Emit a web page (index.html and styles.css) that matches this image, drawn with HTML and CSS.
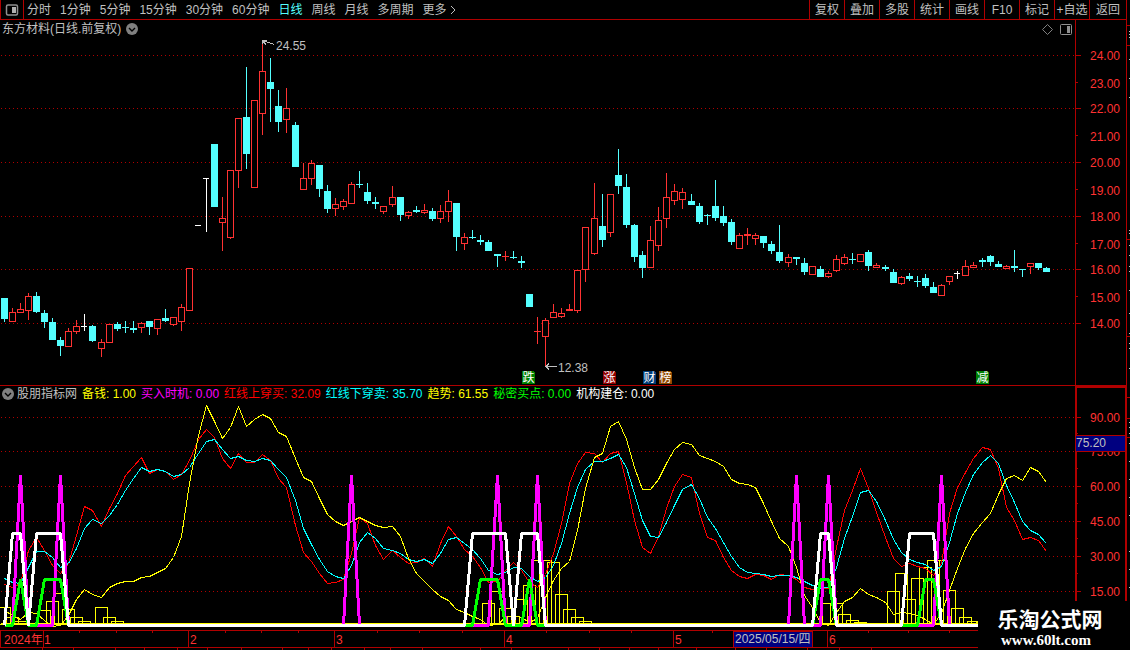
FILE: index.html
```html
<!DOCTYPE html>
<html lang="zh-CN">
<head>
    <meta charset="UTF-8">
    <meta name="viewport" content="width=device-width, initial-scale=1.0">
    <title>东方材料 日线</title>
    <link rel="stylesheet" href="styles.css">
</head>
<body>
    <div class="app">
        <header class="toolbar">
            <button class="panel-toggle" aria-label="侧栏">
                <svg width="14" height="12" viewBox="0 0 14 12"><rect x="1.500" y="1" width="11" height="10" rx="1.500" fill="none" stroke="#909090" stroke-width="1.500"/><rect x="7" y="3" width="4" height="6" fill="#b0b0b0"/></svg>
            </button>
            <nav class="periods">
                <button>分时</button>
                <button>1分钟</button>
                <button>5分钟</button>
                <button>15分钟</button>
                <button>30分钟</button>
                <button>60分钟</button>
                <button class="active">日线</button>
                <button>周线</button>
                <button>月线</button>
                <button>多周期</button>
                <button class="more">更多<svg width="7" height="10" viewBox="0 0 7 10"><path d="M1 1l4 4-4 4" fill="none" stroke="#c0c0c0"/></svg></button>
            </nav>
            <div class="tools">
                <button>复权</button>
                <button>叠加</button>
                <button>多股</button>
                <button>统计</button>
                <button>画线</button>
                <button>F10</button>
                <button>标记</button>
                <button>+自选</button>
                <button>返回</button>
            </div>
        </header>

        <main class="charts">
            <section class="pane price">
                <div class="plot">
                    <div class="pane-head">
                        <span>东方材料(日线.前复权)</span>
                        <button class="drop" aria-label="展开"><svg width="12" height="12" viewBox="0 0 12 12"><circle cx="6" cy="6" r="6" fill="#808080"/><path d="M3 5l3 3 3-3" fill="none" stroke="#000" stroke-width="1.4"/></svg></button>
                        <span class="head-icons">
                            <svg width="11" height="11" viewBox="0 0 11 11"><path d="M5.500.5l5 5-5 5-5-5z" fill="none" stroke="#808080"/></svg>
                            <svg width="12" height="11" viewBox="0 0 12 11"><rect x=".5" y=".5" width="11" height="10" rx="1" fill="none" stroke="#909090"/><rect x="7" y="2" width="3" height="7" fill="#909090"/></svg>
                        </span>
                    </div>
                    <svg class="canvas" id="priceChart" height="347"></svg>
                </div>
                <svg class="scale" id="priceScale" width="51" height="365"></svg>
            </section>

            <section class="pane indicator">
                <div class="plot">
                    <div class="legend">
                        <button class="drop" aria-label="展开"><svg width="12" height="12" viewBox="0 0 12 12"><circle cx="6" cy="6" r="6" fill="#808080"/><path d="M3 5l3 3 3-3" fill="none" stroke="#000" stroke-width="1.4"/></svg></button>
                        <span class="name">股朋指标网</span>
                        <span class="yellow">备钱: 1.00</span>
                        <span class="magenta">买入时机: 0.00</span>
                        <span class="red">红线上穿买: 32.09</span>
                        <span class="cyan">红线下穿卖: 35.70</span>
                        <span class="yellow">趋势: 61.55</span>
                        <span class="green">秘密买点: 0.00</span>
                        <span class="white">机构建仓: 0.00</span>
                    </div>
                    <svg class="canvas" id="lineChart" height="228"></svg>
                </div>
                <svg class="scale" id="lineScale" width="52" height="245"></svg>
            </section>

            <svg class="dates" id="dateAxis" height="20"></svg>
        </main>

        <svg class="edge" id="edge" width="3" height="650"></svg>

        <div class="brand">
            <div class="brand-name">乐淘公式网</div>
            <div class="brand-url">www.60lt.com</div>
        </div>
    </div>

    <script src="chart.js"></script>
</body>
</html>
```
FILE: styles.css
```css
body, html {
    margin: 0;
    padding: 0;
    background-color: #000;
}

body {
    font-family: "Liberation Sans", "Noto Sans CJK SC", sans-serif;
    font-size: 12px;
    line-height: 16px;
    color: #c0c0c0;
}

button {
    margin: 0;
    padding: 0;
    border: 0;
    background: none;
    color: inherit;
    font: inherit;
    white-space: nowrap;
    cursor: pointer;
}

svg {
    display: block;
}

.app {
    position: relative;
    display: grid;
    grid-template-columns: minmax(0, 1fr) 3px;
    min-height: 100vh;
    overflow: hidden;
}

/* toolbar */
.toolbar {
    display: flex;
    height: 19px;
    border-bottom: 1px solid #b00000;
    border-right: 1px solid #b00000;
}

.panel-toggle {
    display: flex;
    align-items: center;
    justify-content: center;
    width: 24px;
    box-sizing: border-box;
    border-left: 1px solid #b00000;
    border-right: 1px solid #b00000;
}

.periods {
    display: flex;
    gap: 9px;
    padding-left: 3px;
}

.periods .active {
    color: #54ffff;
}

.more {
    display: flex;
    align-items: center;
    gap: 3px;
}

.tools {
    display: flex;
    margin-left: auto;
}

.tools button {
    width: 35px;
    box-sizing: border-box;
    border-left: 1px solid #b00000;
}

.tools button:last-child {
    width: 37px;
}

/* charts */
.charts {
    grid-column: 1;
    grid-row: 2;
    min-width: 0;
}

.pane {
    display: flex;
}

.price {
    height: 365px;
    border-bottom: 1px solid #b00000;
    border-right: 1px solid #b00000;
}

.indicator {
    height: 244px;
    border-bottom: 1px solid #b00000;
}

.plot {
    flex: 1;
    min-width: 0;
}

.scale {
    flex: none;
    overflow: visible;
}

.canvas {
    width: 100%;
}

.pane-head {
    display: flex;
    align-items: center;
    gap: 5px;
    height: 18px;
    padding-left: 2px;
    line-height: 18px;
}

.head-icons {
    display: flex;
    gap: 7px;
    margin-left: auto;
    padding-right: 3px;
}

.legend {
    display: flex;
    align-items: center;
    gap: 5px;
    height: 16px;
    padding-left: 2px;
    white-space: nowrap;
}

.legend .name {
    margin-left: -2px;
}

.yellow {
    color: #ffff00;
}

.magenta {
    color: #ff00ff;
}

.red {
    color: #ff0000;
}

.cyan {
    color: #00ffff;
}

.green {
    color: #00ff00;
}

.white {
    color: #ffffff;
}

.dates {
    width: 100%;
}

.edge {
    grid-column: 2;
    grid-row: 1 / 3;
}

svg text {
    font-size: 12px;
    fill: #c0c0c0;
}

svg .label {
    fill: #ff3232;
}

svg .badge {
    fill: #fff;
}

/* site mark over the corner */
.brand {
    position: absolute;
    right: 0;
    bottom: 0;
    width: 152px;
    height: 50px;
    box-sizing: border-box;
    padding: 8px 16px 0 0;
    background-color: #000;
    color: #fff;
    text-align: center;
}

.brand-name {
    padding-left: 8px;
    font-size: 21px;
    font-weight: bold;
    line-height: 22px;
}

.brand-url {
    font-family: "Liberation Serif", serif;
    font-size: 15px;
    font-weight: bold;
    line-height: 18px;
}
```
FILE: chart.js
```js
var NS = 'http://www.w3.org/2000/svg';
var DARK = '#b00000';
var UP = '#ff3232';
var DOWN = '#54ffff';

// kind, body top, body bottom, high, low
var candles = `d 298 319 298 322|u 312 322 308 322|u 309 313 303 313|u 296 311 293 320|d 296 312 292 313|d 313 322 310 328
d 322 340 318 340|d 340 346 337 356|u 331 347 328 347|u 326 332 320 334|w 326 327 314 331|d 326 341 325 342
u 342 349 339 357|u 324 343 324 343|d 324 329 322 331|d 327 328 321 333|d 328 330 321 333|u 323 328 322 333
d 321 327 321 335|u 319 329 319 335|d 318 321 309 322|u 317 325 317 326|u 307 322 304 331|u 268 311 268 311
w 225 226 225 226|w 178 179 178 232|d 144 207 144 207|u 218 223 197 251|u 170 238 170 239|u 118 171 118 188
d 117 154 67 169|u 100 188 100 188|u 71 114 42 135|d 82 89 58 122|d 106 122 90 132|u 108 120 88 133
d 125 167 122 167|u 178 190 163 190|u 163 179 160 185|d 165 189 165 197|d 191 209 185 213|u 204 209 198 216
u 201 207 199 210|u 184 204 182 204|d 184 185 171 188|d 192 201 183 204|d 202 204 197 209|u 206 212 206 214
u 197 205 186 207|d 197 215 197 221|u 212 216 211 219|d 210 212 206 213|u 210 213 204 214|d 211 219 208 221
u 211 219 205 223|u 201 212 190 222|d 203 237 203 251|u 237 244 233 250|d 237 238 230 239|d 240 242 235 245
d 242 251 240 251|d 254 256 254 267|u 256 257 251 261|d 257 258 251 259|d 261 263 256 268|d 294 307 294 307
u 331 332 317 344|u 320 337 318 367|u 312 318 304 318|u 313 317 308 318|u 309 311 304 311|u 270 311 270 313
u 227 270 227 282|u 218 254 183 255|d 226 240 194 247|u 194 233 194 237|d 175 186 149 194|d 187 225 174 228
d 225 257 224 262|d 255 268 251 278|u 240 268 226 268|u 220 246 207 251|u 197 219 173 228|u 191 201 184 205
u 192 200 188 209|d 201 205 194 205|d 206 222 203 224|d 215 216 214 225|d 206 218 180 221|d 216 223 206 226
d 222 242 219 245|u 235 249 233 249|u 234 236 228 245|u 235 239 233 245|d 236 243 236 248|d 244 251 241 254
d 252 261 225 263|u 257 263 254 267|d 257 259 257 265|d 263 272 258 275|u 266 275 266 275|d 269 277 266 277
u 273 277 271 278|u 259 271 255 272|u 257 264 254 265|d 259 260 253 264|u 254 262 254 262|d 252 266 250 271
u 265 268 263 268|d 267 269 265 271|d 272 283 269 283|u 277 284 276 285|d 276 279 273 281|d 281 282 276 287
d 278 286 274 288|d 287 293 282 293|u 285 296 284 296|u 276 282 276 285|w 273 274 271 279|u 266 276 260 276
u 265 268 262 268|d 260 262 258 267|d 256 262 255 266|d 264 267 261 267|u 266 269 265 269|d 266 268 250 272
d 269 270 269 277|u 263 267 263 274|d 263 268 263 270|d 268 272 267 272`.split(/[|\n]/);

var red = [584, 587, 583, 550, 537, 550, 565, 573, 563, 535, 506, 510, 526, 508, 493, 475, 466, 457, 473, 469, 471, 479, 474, 460, 439, 429, 437, 458, 468, 453, 462, 462, 454, 460, 478, 487, 525, 552, 561, 573, 583, 582, 579, 553, 517, 523, 545, 559, 550, 557, 563, 562, 558, 566, 543, 526, 536, 549, 556, 567, 582, 581, 570, 562, 570, 582, 587, 574, 553, 523, 483, 463, 452, 453, 462, 453, 451, 482, 520, 547, 553, 536, 508, 486, 474, 477, 513, 537, 540, 557, 570, 576, 578, 574, 575, 579, 574, 575, 579, 587, 589, 588, 588, 547, 510, 490, 468, 488, 512, 537, 558, 566, 563, 566, 568, 575, 563, 513, 487, 472, 458, 447, 449, 468, 507, 520, 539, 537, 540, 551];
var cyan = [578, 582, 583, 567, 551, 551, 557, 567, 563, 548, 528, 519, 523, 515, 504, 490, 478, 467, 471, 469, 471, 476, 474, 467, 453, 441, 439, 449, 458, 456, 460, 461, 458, 460, 469, 477, 500, 528, 544, 559, 571, 576, 578, 565, 542, 532, 538, 548, 550, 553, 559, 561, 559, 563, 553, 539, 537, 543, 549, 558, 570, 574, 572, 567, 568, 576, 581, 577, 565, 543, 513, 487, 469, 461, 461, 458, 454, 467, 493, 520, 536, 537, 522, 505, 489, 484, 498, 517, 528, 542, 556, 567, 572, 573, 574, 576, 575, 575, 577, 581, 585, 588, 587, 567, 538, 516, 492, 490, 501, 520, 539, 552, 559, 562, 564, 570, 566, 542, 513, 492, 474, 462, 455, 463, 485, 502, 521, 530, 534, 543];
var trend = [610, 615, 619, 612, 613, 620, 626, 625, 615, 599, 589, 594, 597, 587, 583, 581, 581, 577, 576, 572, 568, 557, 536, 483, 435, 405, 421, 438, 427, 406, 426, 419, 414, 418, 432, 436, 458, 477, 481, 498, 514, 521, 525, 521, 517, 521, 525, 527, 526, 536, 558, 573, 581, 589, 596, 600, 609, 612, 616, 619, 625, 624, 617, 615, 617, 622, 618, 597, 580, 568, 561, 530, 488, 457, 453, 426, 421, 439, 467, 489, 489, 479, 463, 449, 442, 444, 455, 458, 461, 466, 479, 483, 484, 487, 503, 521, 538, 546, 567, 595, 607, 622, 625, 612, 601, 597, 588, 594, 597, 602, 614, 612, 613, 615, 619, 624, 613, 590, 568, 548, 533, 522, 513, 494, 478, 475, 480, 467, 471, 482];

// candle index: top of bar
var bars = {
    0: 607, 1: 617, 2: 621, 5: 610, 6: 601, 7: 593, 8: 609, 9: 617, 10: 621, 12: 607, 13: 617, 14: 621,
    60: 603, 61: 591, 62: 608, 63: 616, 64: 599, 65: 585, 66: 560, 67: 560, 68: 562, 69: 594, 70: 609, 71: 617, 72: 621,
    102: 603, 103: 603, 104: 614, 105: 620, 106: 622,
    110: 591, 111: 573, 112: 599, 113: 578, 114: 567, 115: 560, 116: 560, 117: 590, 118: 608, 119: 617, 120: 621, 121: 622
};

function add(parent, tag, attrs, text) {
    var el = document.createElementNS(NS, tag);
    for (var key in attrs) {
        el.setAttribute(key, attrs[key]);
    }
    if (text) {
        el.textContent = text;
    }
    parent.appendChild(el);
    return el;
}

function layer(id, top) {
    return add(document.getElementById(id), 'g', { transform: 'translate(0,' + -top + ')', 'shape-rendering': 'crispEdges' });
}

function rect(g, x, y, w, h, fill) {
    add(g, 'rect', { x: x, y: y, width: w, height: h, fill: fill });
}

function candleX(i) {
    return Math.floor(4.05 + 8.0823 * i);
}

function gridLine(g, y) {
    add(g, 'line', { x1: 1, y1: y + 0.5, x2: '100%', y2: y + 0.5, stroke: DARK, 'stroke-dasharray': '1 3' });
}

function polyline(g, points, color, width) {
    add(g, 'polyline', { points: points.join(' '), fill: 'none', stroke: color, 'stroke-width': width, 'stroke-linejoin': 'bevel' });
}

function series(g, values, color) {
    polyline(g, values.map(function(y, i) {
        return (candleX(i) + 0.5) + ',' + (y + 0.5);
    }), color, 1);
}

// Signal line: zero everywhere except inside the [from, to] ranges
function signal(g, ranges, top, base, color) {
    var points = [];
    for (var i = 0; i < candles.length; i++) {
        var on = ranges.some(function(r) { return i >= r[0] && i <= r[1]; });
        points.push((candleX(i) + 0.5) + ',' + (on ? top : base));
    }
    polyline(g, points, color, 3);
}

function drawPrice() {
    var g = layer('priceChart', 38);
    [55, 108, 162, 216, 269, 323].forEach(function(y) { gridLine(g, y); });

    candles.forEach(function(row, i) {
        var c = row.split(' ');
        var x = candleX(i);
        var top = +c[1], bottom = +c[2], high = +c[3], low = +c[4];
        var color = c[0] === 'u' ? UP : c[0] === 'd' ? DOWN : '#fff';
        rect(g, x, high, 1, low - high, color);
        if (c[0] === 'u' && bottom - top > 2) {
            rect(g, x - 3, top, 7, bottom - top, color);
            rect(g, x - 2, top + 1, 5, bottom - top - 2, '#000');
        } else {
            rect(g, x - 3, top, c[0] === 'w' ? 6 : 7, bottom - top, color);
        }
    });

    add(g, 'path', { d: 'M274 44.500l-11-4M262.500 44v-4h4M263 41l3 4', fill: 'none', stroke: '#c0c0c0' });
    add(g, 'text', { x: 276, y: 50 }, '24.55');
    add(g, 'path', { d: 'M557 366.500h-11M549 363.500l-3 3 3 3', fill: 'none', stroke: '#c0c0c0' });
    add(g, 'text', { x: 558, y: 372 }, '12.38');

    [[522, '跌', '#008000'], [603, '涨', '#900000'], [643, '财', '#003c78'], [659, '榜', '#904800'], [976, '减', '#008000']].forEach(function(b) {
        add(g, 'path', { d: 'M' + b[0] + ' 371h11l2 2v11h-13z', fill: b[2] });
        add(g, 'text', { x: b[0] + 0.5, y: 382, 'class': 'badge' }, b[1]);
    });
}

function drawLines() {
    var g = layer('lineChart', 402);
    [417, 451, 486, 521, 556, 591].forEach(function(y) { gridLine(g, y); });

    for (var i in bars) {
        add(g, 'rect', { x: candleX(+i) - 5.5, y: bars[i] + 0.5, width: 12, height: 624 - bars[i], fill: 'none', stroke: '#ffff00' });
    }
    rect(g, 1, 623, candleX(129), 1, '#ffff00');
    series(g, red, '#ff0000');
    series(g, cyan, '#00ffff');
    series(g, trend, '#ffff00');

    signal(g, [[2, 2], [7, 7], [43, 43], [61, 61], [66, 66], [98, 98], [102, 102], [116, 116]], 475, 625.5, '#ff00ff');
    signal(g, [[2, 2], [5, 7], [59, 61], [65, 65], [101, 102], [114, 115]], 579.5, 625.5, '#00ff00');
    signal(g, [[1, 2], [4, 7], [58, 62], [64, 66], [101, 102], [112, 115]], 533.5, 625.5, '#ffffff');
}

function drawPriceScale() {
    var g = layer('priceScale', 20);
    rect(g, 0, 20, 1, 365, DARK);
    [55, 82, 108, 135, 162, 189, 216, 243, 269, 296, 323].forEach(function(y, i) {
        rect(g, 1, y, i % 2 ? 2 : 5, 1, DARK);
        add(g, 'text', { x: 15, y: y + (i % 2 ? 6 : 5), 'class': 'label' }, (24 - i) + '.00');
    });
}

function drawLineScale() {
    var g = layer('lineScale', 386);
    add(g, 'rect', { x: 1, y: 387, width: 50, height: 270, fill: 'none', stroke: DARK, 'stroke-width': 2 });
    [417, 451, 486, 521, 556, 591].forEach(function(y, i) {
        rect(g, 2, y, 4, 1, DARK);
        if (i) {
            rect(g, 2, y - 18, 1, 1, DARK);
        }
        add(g, 'text', { x: 15, y: y + 5, 'class': 'label' }, (90 - i * 15) + '.00');
    });
    // crosshair value
    rect(g, 1, 435, 49, 17, DARK);
    rect(g, 1, 436, 49, 15, '#000080');
    add(g, 'text', { x: 1, y: 447 }, '75.20');
}

function drawDates() {
    var g = layer('dateAxis', 630);
    rect(g, 0, 630, 1, 16, DARK);
    rect(g, 0, 646, '100%', 1, DARK);
    [43, 188, 334, 504, 673, 827].forEach(function(x) { rect(g, x, 630, 1, 16, DARK); });
    [79, 116, 152, 225, 261, 298, 377, 419, 462, 546, 589, 631, 712, 868, 908, 949].forEach(function(x) { rect(g, x, 630, 1, 2, DARK); });
    [42, 73, 115, 144, 177, 207, 241, 282, 308, 331, 364, 390, 422, 480, 511, 568, 599, 629, 658, 696, 735, 766, 807, 839, 871].forEach(function(x) { rect(g, x, 647, 1, 3, DARK); });

    [[4, '2024年'], [44, '1'], [190, '2'], [336, '3'], [506, '4'], [675, '5'], [829, '6']].forEach(function(t) {
        add(g, 'text', { x: t[0], y: 643, 'class': 'label' }, t[1]);
    });
    rect(g, 733, 630, 80, 16, DARK);
    rect(g, 734, 631, 78, 15, '#000080');
    add(g, 'text', { x: 735, y: 642 }, '2025/05/15/四');

    // top of the quote strip below
    [8, 11, 17, 20, 51, 829, 832].forEach(function(x) { rect(g, x, 649, 2, 1, '#c0c0c0'); });
    rect(g, 850, 649, 6, 1, DOWN);
    rect(g, 858, 649, 8, 1, DOWN);
}

function drawEdge() {
    var g = layer('edge', 0);
    [25, 45, 239, 336, 397, 418, 437].forEach(function(y) { rect(g, 0, y, 3, 1, DARK); });
    [31, 34, 37, 59, 78, 97, 230, 233, 245, 255, 266, 271, 290, 313, 333, 343, 348, 368, 422, 427, 433, 443, 461, 479, 497, 515, 551, 569, 587].forEach(function(y) {
        rect(g, 2, y, 1, 1, '#c0c0c0');
    });
}

drawPrice();
drawLines();
drawPriceScale();
drawLineScale();
drawDates();
drawEdge();
```
